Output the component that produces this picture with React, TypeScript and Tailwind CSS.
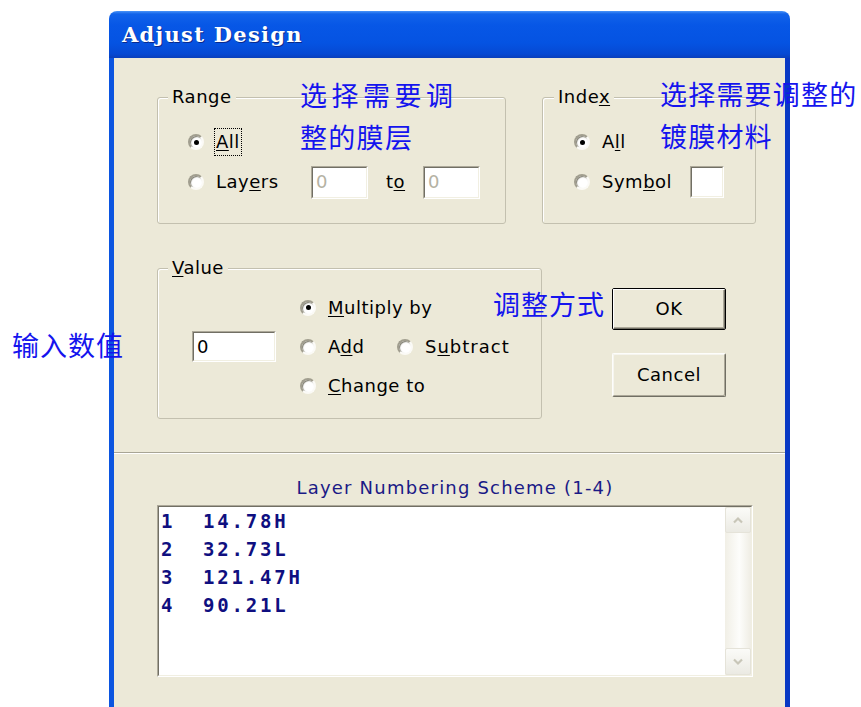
import React from "react";

// small helpers for the classic dialog controls

function Radio({ checked }: { checked?: boolean }) {
  return (
    <span className="flex h-[16px] w-[16px] shrink-0 items-center justify-center rounded-full border-2 border-t-[#a19e8f] border-l-[#a19e8f] border-r-[#fbfaf6] border-b-[#fbfaf6] bg-white shadow-[inset_1px_1px_1px_#7d7b6e]">
      {checked && <span className="h-[5px] w-[5px] rounded-full bg-black" />}
    </span>
  );
}

function Edit({ className, value, disabled }: { className: string; value?: string; disabled?: boolean }) {
  return (
    <div
      className={`flex shrink-0 items-center border border-t-[#aca899] border-l-[#aca899] border-r-white border-b-white ${className}`}
    >
      <div className="flex h-full w-full items-center border border-t-[#716f64] border-l-[#716f64] border-r-[#f1efe2] border-b-[#f1efe2] bg-white pl-[3px]">
        <span className={disabled ? "text-[#b5b2a3]" : "text-black"}>{value}</span>
      </div>
    </div>
  );
}

function Chevron({ up }: { up?: boolean }) {
  return (
    <svg width="12" height="8" viewBox="0 0 12 8">
      <polyline
        points={up ? "2,6.5 6,2.5 10,6.5" : "2,1.5 6,5.5 10,1.5"}
        fill="none"
        stroke="#c8c6b8"
        strokeWidth="2.2"
      />
    </svg>
  );
}

const layers = [
  { n: "1", v: "14.78H" },
  { n: "2", v: "32.73L" },
  { n: "3", v: "121.47H" },
  { n: "4", v: "90.21L" },
];

export default function App() {
  return (
    <div className="relative h-[707px] w-[861px] overflow-hidden bg-white pl-[109px] pt-[11px] font-['DejaVu_Sans',sans-serif] text-[18px] leading-[20px] tracking-[0.5px] text-black">
      <div className="w-[681px]">
        {/* title bar */}
        <div className="flex h-[47px] items-center rounded-t-[8px] bg-[linear-gradient(to_bottom,#4a94f7_0px,#1163ea_3px,#0757e6_14px,#0553e2_32px,#0649d3_43px,#0a3fbb_47px)] pl-[13px]">
          <span className="font-['DejaVu_Serif',serif] text-[21px] font-bold tracking-[1.3px] text-white [text-shadow:1px_1px_0_#0a2a8c]">
            Adjust Design
          </span>
        </div>

        {/* dialog body */}
        <div className="flex h-[649px] flex-col border-x-[5px] border-l-[#0b55e0] border-r-[#0838c4] bg-[#ece9d8]">
          <div className="ml-[43px] mt-[29px] flex gap-[36px]">
            <fieldset className="h-[137px] w-[349px] rounded-[3px] border border-[#c3c0af] shadow-[inset_1px_1px_0_#fff]">
              <legend className="ml-[10px] bg-[#ece9d8] px-[4px]">Range</legend>
              <div className="flex flex-col gap-[6px] pl-[30px] pt-[18px]">
                <div className="flex h-[34px] items-center">
                  <Radio checked />
                  <span className="ml-[10px] flex h-[28px] items-center border border-dotted border-black px-[1px]">
                    <u className="underline-offset-2">A</u>ll
                  </span>
                </div>
                <div className="flex h-[34px] items-center">
                  <Radio />
                  <span className="ml-[12px] w-[95px]">
                    Lay<u className="underline-offset-2">e</u>rs
                  </span>
                  <Edit className="h-[33px] w-[57px]" value="0" disabled />
                  <span className="mx-[18px]">
                    t<u className="underline-offset-2">o</u>
                  </span>
                  <Edit className="h-[33px] w-[57px]" value="0" disabled />
                </div>
              </div>
            </fieldset>

            <fieldset className="h-[137px] w-[214px] rounded-[3px] border border-[#c3c0af] shadow-[inset_1px_1px_0_#fff]">
              <legend className="ml-[11px] bg-[#ece9d8] px-[4px]">
                Inde<u className="underline-offset-2">x</u>
              </legend>
              <div className="flex flex-col gap-[6px] pl-[31px] pt-[18px]">
                <div className="flex h-[34px] items-center">
                  <Radio checked />
                  <span className="ml-[12px]">
                    A<u className="underline-offset-2">l</u>l
                  </span>
                </div>
                <div className="flex h-[34px] items-center">
                  <Radio />
                  <span className="ml-[12px] w-[88px]">
                    Sym<u className="underline-offset-2">b</u>ol
                  </span>
                  <Edit className="h-[32px] w-[34px]" />
                </div>
              </div>
            </fieldset>
          </div>

          <div className="ml-[43px] mt-[34px] flex">
            <fieldset className="h-[161px] w-[385px] rounded-[3px] border border-[#c3c0af] shadow-[inset_1px_1px_0_#fff]">
              <legend className="ml-[10px] bg-[#ece9d8] px-[4px]">
                <u className="underline-offset-2">V</u>alue
              </legend>
              <div className="flex h-[127px] items-center pl-[34px] pt-[10px]">
                <Edit className="h-[31px] w-[84px]" value="0" />
                <div className="ml-[24px] grid grid-cols-[97px_auto] grid-rows-[39px_39px_39px] items-center">
                  <div className="col-span-2 flex items-center gap-[12px]">
                    <Radio checked />
                    <span>
                      <u className="underline-offset-2">M</u>ultiply by
                    </span>
                  </div>
                  <div className="flex items-center gap-[12px]">
                    <Radio />
                    <span>
                      A<u className="underline-offset-2">d</u>d
                    </span>
                  </div>
                  <div className="flex items-center gap-[12px]">
                    <Radio />
                    <span className="tracking-[1px]">
                      S<u className="underline-offset-2">u</u>btract
                    </span>
                  </div>
                  <div className="col-span-2 flex items-center gap-[12px]">
                    <Radio />
                    <span>
                      <u className="underline-offset-2">C</u>hange to
                    </span>
                  </div>
                </div>
              </div>
            </fieldset>

            <div className="ml-[70px] mt-[30px] flex flex-col gap-[23px]">
              <button className="h-[42px] w-[114px] rounded-[2px] border border-black bg-[#ece9d8]">
                <div className="flex h-full w-full items-center justify-center border border-t-white border-l-white border-r-[#716f64] border-b-[#716f64] shadow-[inset_-1px_-1px_0_#aca899]">
                  OK
                </div>
              </button>
              <button className="flex h-[44px] w-[114px] items-center justify-center rounded-[2px] border border-t-[#fdfdfb] border-l-[#fdfdfb] border-r-[#716f64] border-b-[#716f64] bg-[#ece9d8] shadow-[inset_-1px_-1px_0_#aca899,inset_1px_1px_0_#f6f5ef]">
                Cancel
              </button>
            </div>
          </div>

          <div className="mt-[33px] border-t border-b border-t-[#a8a595] border-b-white" />

          <div className="ml-[43px] mt-[23px] w-[596px] text-center leading-[22px] tracking-[1.2px] text-[#1a1a86]">
            Layer Numbering Scheme (1-4)
          </div>

          {/* list of layers */}
          <div className="ml-[43px] mt-[6px] h-[172px] w-[596px] border border-t-[#aca899] border-l-[#aca899] border-r-white border-b-white">
            <div className="flex h-full w-full border border-t-[#716f64] border-l-[#716f64] border-r-[#f1efe2] border-b-[#f1efe2] bg-white">
              <div className="flex-1 pl-[2px] font-['DejaVu_Sans_Mono',monospace] text-[19px] font-bold tracking-[2.8px] text-[#0f0f80]">
                {layers.map((l) => (
                  <div key={l.n} className="flex h-[28px] items-center">
                    <span className="w-[42px]">{l.n}</span>
                    <span>{l.v}</span>
                  </div>
                ))}
              </div>
              <div className="flex w-[26px] flex-col bg-[linear-gradient(to_right,#f1efe6,#fdfdfb_55%,#efede4)]">
                <div className="flex h-[26px] items-center justify-center rounded-[2px] border border-[#e5e3d9] bg-[linear-gradient(to_bottom,#fbfbf8,#ebeae3)]">
                  <Chevron up />
                </div>
                <div className="flex-1" />
                <div className="flex h-[27px] items-center justify-center rounded-[2px] border border-[#e5e3d9] bg-[linear-gradient(to_bottom,#fbfbf8,#ebeae3)]">
                  <Chevron />
                </div>
              </div>
            </div>
          </div>
        </div>
      </div>

      {/* blue notes written over the dialog */}
      <div className="absolute left-[300px] top-[74px] font-['Noto_Sans_CJK_SC',sans-serif] text-[27px] leading-[42px] text-[#1414ee]">
        <div className="tracking-[4.5px]">选择需要调</div>
        <div className="tracking-[1.3px]">整的膜层</div>
      </div>
      <div className="absolute left-[660px] top-[73px] whitespace-nowrap font-['Noto_Sans_CJK_SC',sans-serif] text-[27px] leading-[42px] tracking-[1.2px] text-[#1414ee]">
        <div>选择需要调整的</div>
        <div>镀膜材料</div>
      </div>
      <div className="absolute left-[493px] top-[283px] font-['Noto_Sans_CJK_SC',sans-serif] text-[27px] leading-[42px] tracking-[1px] text-[#1414ee]">
        调整方式
      </div>
      <div className="absolute left-[12px] top-[324px] font-['Noto_Sans_CJK_SC',sans-serif] text-[27px] leading-[42px] tracking-[1px] text-[#1414ee]">
        输入数值
      </div>
    </div>
  );
}
